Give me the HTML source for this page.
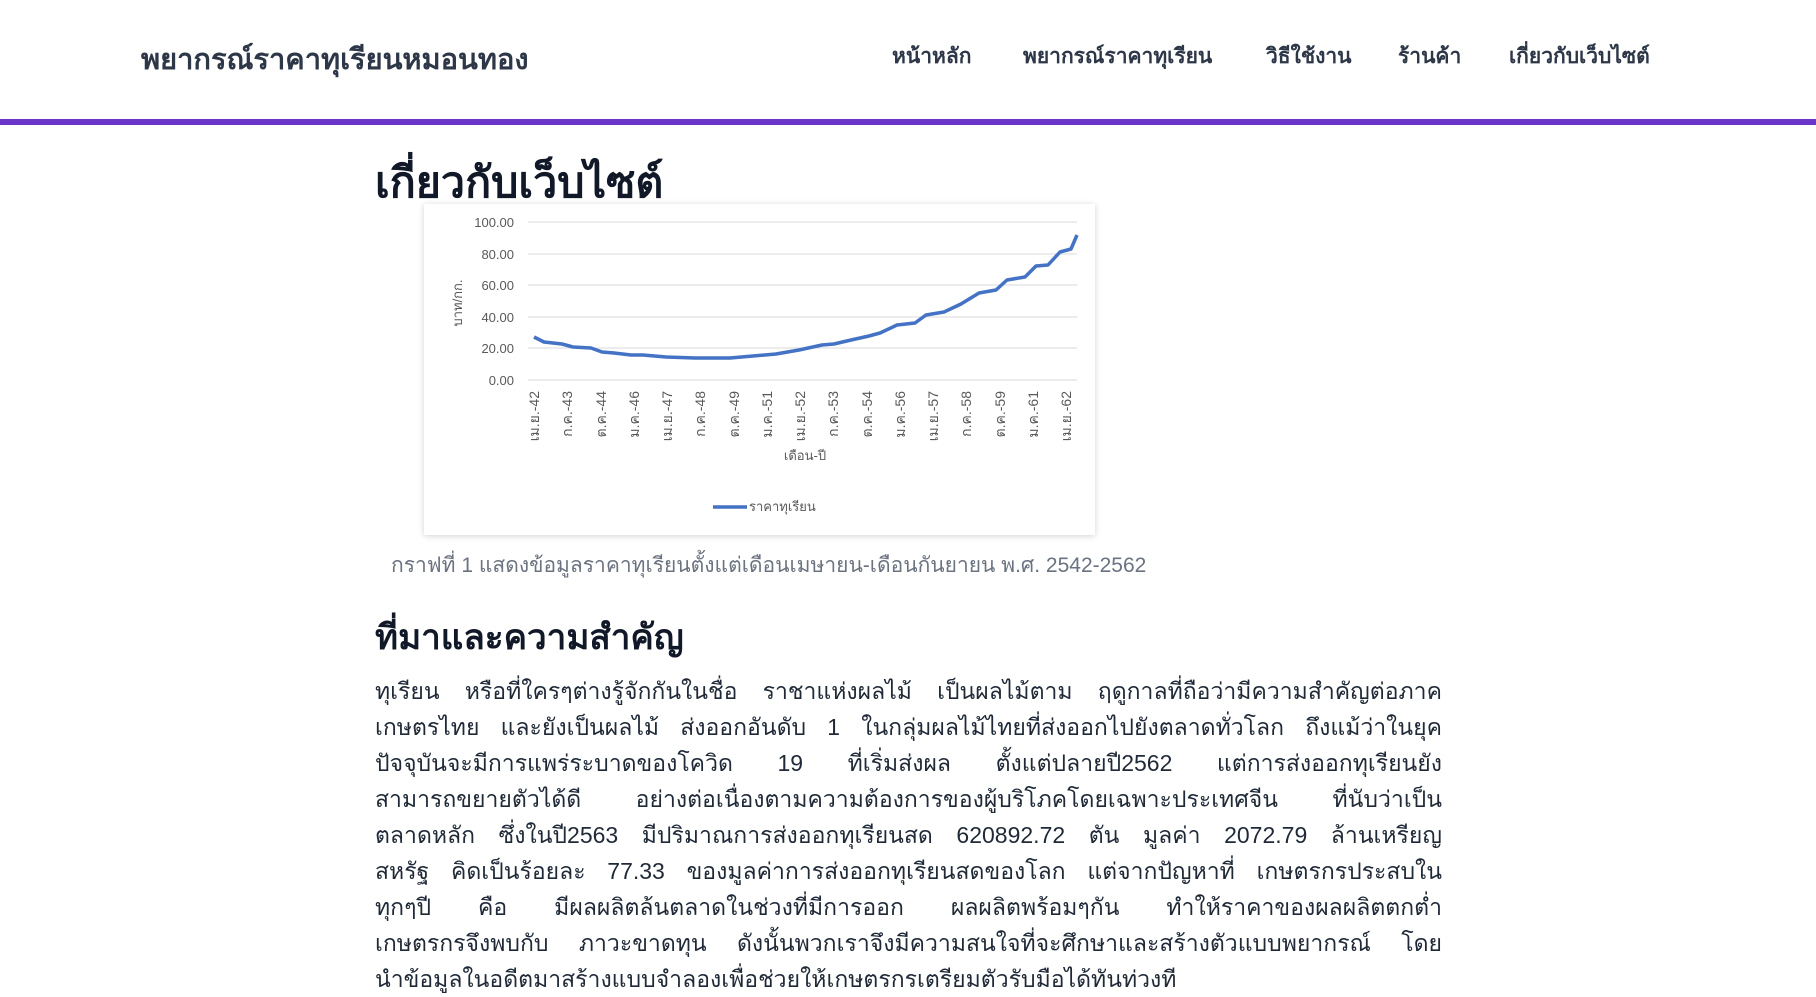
<!DOCTYPE html>
<html lang="th">
<head>
<meta charset="utf-8">
<style>
*{margin:0;padding:0;box-sizing:border-box}
html,body{width:1816px;height:969px;overflow:hidden;background:#fff;font-family:"Liberation Sans","Noto Sans CJK SC",sans-serif;color:#1a202c}
.hdr{position:absolute;left:0;top:0;width:1816px;height:119px;background:#fff}
.bar{position:absolute;left:0;top:119px;width:1816px;height:6px;background:#6b35c9}
.logo{position:absolute;left:141px;top:36px;font-size:29px;font-weight:bold;color:#2d3748;white-space:nowrap}
.nav{position:absolute;top:40px;font-size:21px;font-weight:bold;color:#2d3748;white-space:nowrap}
h1{position:absolute;left:375px;top:148px;font-size:43px;font-weight:bold;color:#111827;white-space:nowrap}
.chart{position:absolute;left:424px;top:204px;width:671px;height:331px;background:#fff;box-shadow:0 1px 6px rgba(0,0,0,.18)}
.cap{position:absolute;left:391px;top:549px;font-size:21px;color:#6b7280;white-space:nowrap}
h2{position:absolute;left:375px;top:610px;font-size:35px;font-weight:bold;color:#111827;white-space:nowrap}
.p{position:absolute;left:375px;top:673px;width:1067px;font-size:23px;line-height:36px;color:#1f2937}
.p div{height:36px;white-space:nowrap;overflow:hidden;text-align:justify;text-align-last:justify}
</style>
</head>
<body>
<div class="hdr">
<div class="logo">พยากรณ์ราคาทุเรียนหมอนทอง</div>
<div class="nav" style="left:892px">หน้าหลัก</div>
<div class="nav" style="left:1023px">พยากรณ์ราคาทุเรียน</div>
<div class="nav" style="left:1266px">วิธีใช้งาน</div>
<div class="nav" style="left:1398px">ร้านค้า</div>
<div class="nav" style="left:1509px">เกี่ยวกับเว็บไซต์</div>
</div>
<div class="bar"></div>
<h1>เกี่ยวกับเว็บไซต์</h1>
<div class="chart">
<svg width="671" height="331" viewBox="0 0 671 331" font-family="Liberation Sans, sans-serif">
<g stroke="#d9d9d9" stroke-width="1">
<line x1="104" y1="18" x2="653" y2="18"/><line x1="104" y1="50" x2="653" y2="50"/><line x1="104" y1="81" x2="653" y2="81"/><line x1="104" y1="113" x2="653" y2="113"/><line x1="104" y1="144" x2="653" y2="144"/><line x1="104" y1="176" x2="653" y2="176"/>
</g>
<g font-size="13" fill="#595959" text-anchor="end">
<text x="90" y="23">100.00</text><text x="90" y="55">80.00</text><text x="90" y="86">60.00</text><text x="90" y="118">40.00</text><text x="90" y="149">20.00</text><text x="90" y="181">0.00</text>
</g>
<text transform="translate(38,99) rotate(-90)" font-size="13" fill="#595959" text-anchor="middle">บาท/กก.</text>
<g font-size="14" fill="#595959" text-anchor="end">
<text transform="translate(115,187) rotate(-90)">เม.ย.-42</text>
<text transform="translate(148,187) rotate(-90)">ก.ค.-43</text>
<text transform="translate(182,187) rotate(-90)">ต.ค.-44</text>
<text transform="translate(215,187) rotate(-90)">ม.ค.-46</text>
<text transform="translate(248,187) rotate(-90)">เม.ย.-47</text>
<text transform="translate(281,187) rotate(-90)">ก.ค.-48</text>
<text transform="translate(315,187) rotate(-90)">ต.ค.-49</text>
<text transform="translate(348,187) rotate(-90)">ม.ค.-51</text>
<text transform="translate(381,187) rotate(-90)">เม.ย.-52</text>
<text transform="translate(414,187) rotate(-90)">ก.ค.-53</text>
<text transform="translate(448,187) rotate(-90)">ต.ค.-54</text>
<text transform="translate(481,187) rotate(-90)">ม.ค.-56</text>
<text transform="translate(514,187) rotate(-90)">เม.ย.-57</text>
<text transform="translate(547,187) rotate(-90)">ก.ค.-58</text>
<text transform="translate(581,187) rotate(-90)">ต.ค.-59</text>
<text transform="translate(614,187) rotate(-90)">ม.ค.-61</text>
<text transform="translate(647,187) rotate(-90)">เม.ย.-62</text>
</g>
<text x="381" y="256" font-size="13" fill="#595959" text-anchor="middle">เดือน-ปี</text>
<polyline fill="none" stroke="#4472c4" stroke-width="3.5" stroke-linejoin="round" points="110,133 120,138 138,140 149,143 167,144 178,148 190,149 207,151 219,151 242,153 271,154 306,154 329,152 352,150 375,146 398,141 410,140 427,136 445,132 456,129 473,121 491,119 502,111 520,108 537,100 555,89 572,86 583,76 601,73 612,62 624,61 636,48 647,45 653,31"/>
<line x1="289" y1="303" x2="323" y2="303" stroke="#4472c4" stroke-width="3.5"/>
<text x="325" y="307" font-size="13" fill="#595959">ราคาทุเรียน</text>
</svg>
</div>
<div class="cap">กราฟที่ 1 แสดงข้อมูลราคาทุเรียนตั้งแต่เดือนเมษายน-เดือนกันยายน พ.ศ. 2542-2562</div>
<h2>ที่มาและความสำคัญ</h2>
<div class="p">
<div>ทุเรียน หรือที่ใครๆต่างรู้จักกันในชื่อ ราชาแห่งผลไม้ เป็นผลไม้ตาม ฤดูกาลที่ถือว่ามีความสำคัญต่อภาค</div>
<div>เกษตรไทย และยังเป็นผลไม้ ส่งออกอันดับ 1 ในกลุ่มผลไม้ไทยที่ส่งออกไปยังตลาดทั่วโลก ถึงแม้ว่าในยุค</div>
<div>ปัจจุบันจะมีการแพร่ระบาดของโควิด 19 ที่เริ่มส่งผล ตั้งแต่ปลายปี2562 แต่การส่งออกทุเรียนยัง</div>
<div>สามารถขยายตัวได้ดี อย่างต่อเนื่องตามความต้องการของผู้บริโภคโดยเฉพาะประเทศจีน ที่นับว่าเป็น</div>
<div>ตลาดหลัก ซึ่งในปี2563 มีปริมาณการส่งออกทุเรียนสด 620892.72 ตัน มูลค่า 2072.79 ล้านเหรียญ</div>
<div>สหรัฐ คิดเป็นร้อยละ 77.33 ของมูลค่าการส่งออกทุเรียนสดของโลก แต่จากปัญหาที่ เกษตรกรประสบใน</div>
<div>ทุกๆปี คือ มีผลผลิตล้นตลาดในช่วงที่มีการออก ผลผลิตพร้อมๆกัน ทำให้ราคาของผลผลิตตกต่ำ</div>
<div>เกษตรกรจึงพบกับ ภาวะขาดทุน ดังนั้นพวกเราจึงมีความสนใจที่จะศึกษาและสร้างตัวแบบพยากรณ์ โดย</div>
<div>นำข้อมูลในอดีตมาสร้างแบบจำลองเพื่อช่วยให้เกษตรกรเตรียมตัวรับมือได้ทันท่วงที</div>
</div>
</body>
</html>
